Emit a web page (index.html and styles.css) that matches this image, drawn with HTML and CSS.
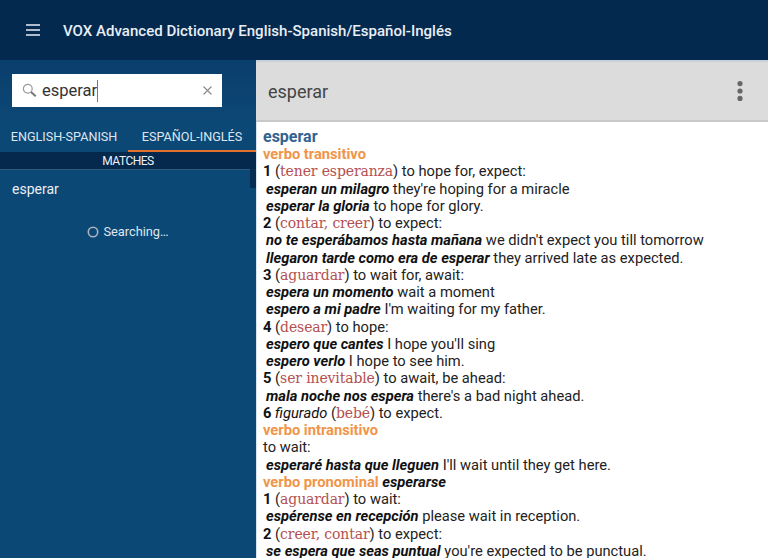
FILE: index.html
```html
<!DOCTYPE html>
<html lang="en">
<head>
<meta charset="utf-8">
<title>VOX Advanced Dictionary</title>
<link rel="stylesheet" href="styles.css">
</head>
<body>
<header class="appbar">
  <svg class="menu-icon" width="14" height="12" viewBox="0 0 14 12"><path d="M0 1h14M0 6h14M0 11h14" stroke="#e6ecf8" stroke-width="1.7" fill="none"/></svg>
  <h1 class="app-title">VOX Advanced Dictionary English-Spanish/Español-Inglés</h1>
</header>
<div class="main">
  <aside class="side">
    <div class="search-wrap">
      <div class="search">
        <svg class="search-icon" width="15" height="15" viewBox="0 0 15 15"><circle cx="5.8" cy="5.8" r="4.4" fill="none" stroke="#9a9a9a" stroke-width="1.2"/><path d="M9 9l4.7 4.2" stroke="#777" stroke-width="2" fill="none"/></svg>
        <span class="search-text">esperar</span><span class="caret"></span>
        <svg class="clear-icon" width="9" height="9" viewBox="0 0 9 9"><path d="M.5.5l8 8M8.5.5l-8 8" stroke="#8a8a8a" stroke-width="1.1" fill="none"/></svg>
      </div>
    </div>
    <nav class="tabs">
      <div class="tab">ENGLISH-SPANISH</div>
      <div class="tab tab-active">ESPAÑOL-INGLÉS</div>
    </nav>
    <div class="list-area">
      <div class="matches">MATCHES</div>
      <div class="match">esperar</div>
      <div class="searching">
        <svg width="12" height="12" viewBox="0 0 12 12"><circle cx="6" cy="6" r="4.7" fill="none" stroke="#a9b4bf" stroke-width="1.6"/></svg>
        <span>Searching…</span>
      </div>
      <div class="scroll-thumb"></div>
    </div>
  </aside>
  <section class="content">
    <div class="word-bar">
      <span class="word-title">esperar</span>
      <svg class="more-icon" width="6" height="20" viewBox="0 0 6 20"><circle cx="3" cy="2.6" r="2.6"/><circle cx="3" cy="10" r="2.6"/><circle cx="3" cy="17.4" r="2.6"/></svg>
    </div>
    <article class="entry">
      <div class="headword">esperar</div>
      <div class="pos">verbo transitivo</div>
      <div><b>1</b> (<span class="syn">tener esperanza</span>) to hope for, expect:</div>
      <div class="ex"><b><i>esperan un milagro</i></b> they're hoping for a miracle</div>
      <div class="ex"><b><i>esperar la gloria</i></b> to hope for glory.</div>
      <div><b>2</b> (<span class="syn">contar, creer</span>) to expect:</div>
      <div class="ex"><b><i>no te esperábamos hasta mañana</i></b> we didn't expect you till tomorrow</div>
      <div class="ex"><b><i>llegaron tarde como era de esperar</i></b> they arrived late as expected.</div>
      <div><b>3</b> (<span class="syn">aguardar</span>) to wait for, await:</div>
      <div class="ex"><b><i>espera un momento</i></b> wait a moment</div>
      <div class="ex"><b><i>espero a mi padre</i></b> I'm waiting for my father.</div>
      <div><b>4</b> (<span class="syn">desear</span>) to hope:</div>
      <div class="ex"><b><i>espero que cantes</i></b> I hope you'll sing</div>
      <div class="ex"><b><i>espero verlo</i></b> I hope to see him.</div>
      <div><b>5</b> (<span class="syn">ser inevitable</span>) to await, be ahead:</div>
      <div class="ex"><b><i>mala noche nos espera</i></b> there's a bad night ahead.</div>
      <div><b>6</b> <i>figurado</i> (<span class="syn">bebé</span>) to expect.</div>
      <div class="pos">verbo intransitivo</div>
      <div>to wait:</div>
      <div class="ex"><b><i>esperaré hasta que lleguen</i></b> I'll wait until they get here.</div>
      <div><span class="pos">verbo pronominal</span> <b><i>esperarse</i></b></div>
      <div><b>1</b> (<span class="syn">aguardar</span>) to wait:</div>
      <div class="ex"><b><i>espérense en recepción</i></b> please wait in reception.</div>
      <div><b>2</b> (<span class="syn">creer, contar</span>) to expect:</div>
      <div class="ex"><b><i>se espera que seas puntual</i></b> you're expected to be punctual.</div>
    </article>
  </section>
</div>
</body>
</html>
```
FILE: styles.css
```css
* { box-sizing: border-box; }
html, body { margin: 0; height: 100%; }
body {
  width: 768px;
  height: 558px;
  overflow: hidden;
  font-family: Roboto, sans-serif;
  background: #0c4876;
  display: flex;
  flex-direction: column;
}
.appbar {
  height: 60px;
  flex: none;
  background: #03294f;
  display: flex;
  align-items: center;
  padding-left: 26px;
  gap: 23px;
}
.menu-icon { flex: none; }
.app-title {
  margin: 2px 0 0;
  font-size: 15.04px;
  font-weight: 500;
  color: #e9eef5;
}
.main { flex: 1; display: flex; min-height: 0; }
.side {
  width: 256px;
  flex: none;
  background: #0c4876;
  color: #e9eef5;
  display: flex;
  flex-direction: column;
}
.search-wrap {
  height: 62px;
  flex: none;
  padding: 14px 34px 15px 12px;
  background: linear-gradient(#0a3e6c, #0c4876);
}
.search {
  height: 33px;
  background: #fff;
  display: flex;
  align-items: center;
  padding-left: 10px;
  padding-right: 10px;
}
.search-icon { flex: none; margin-right: 5px; }
.search-text { font-size: 16.5px; color: #333; }
.caret { width: 1px; height: 22px; background: #2a9d8f; }
.clear-icon { margin-left: auto; }
.tabs { display: flex; height: 30px; flex: none; }
.tab {
  flex: 1;
  font-size: 12.6px;
  display: flex;
  align-items: center;
  justify-content: center;
  color: #dfe6ee;
  padding-bottom: 1px;
}
.tab-active { border-bottom: 2px solid #e2702f; padding-bottom: 0; }
.list-area { position: relative; flex: 1; }
.matches {
  height: 18px;
  background: #04294c;
  border-bottom: 1px solid #2e5a80;
  font-size: 12px;
  letter-spacing: -0.5px;
  text-align: center;
  line-height: 18px;
  color: #eef2f7;
}
.match { padding: 11px 12px 0; font-size: 14px; line-height: 17px; color: #e9eef5; }
.searching {
  margin-top: 26px;
  display: flex;
  align-items: center;
  justify-content: center;
  gap: 4px;
  font-size: 12.8px;
  color: #dfe6ee;
}
.scroll-thumb {
  position: absolute;
  top: 0;
  right: 0;
  width: 6px;
  height: 36px;
  background: #05294b;
  opacity: 0.85;
}
.content { flex: 1; min-width: 0; background: #fff; display: flex; flex-direction: column; }
.word-bar {
  height: 62px;
  flex: none;
  background: #dcdcdc;
  border-top: 2px solid #c8d0da;
  border-bottom: 2px solid #c9c9c9;
  display: flex;
  align-items: center;
  justify-content: space-between;
  padding: 0 25px 0 12px;
}
.word-title { font-size: 18px; color: #444; }
.more-icon { fill: #666; }
.entry {
  flex: 1;
  padding: 6px 7px 0 6px;
  border-left: 1px solid #d5e3ee;
  font-size: 14.7px;
  line-height: 17.25px;
  color: #222;
  overflow: hidden;
  white-space: nowrap;
}
.entry > div { height: 17.25px; }
.entry > .headword { height: 18px; font-size: 16px; font-weight: 700; color: #33628f; }
.pos { font-weight: 700; color: #f0954a; }
.syn { font-family: "DejaVu Serif", serif; font-size: 14px; letter-spacing: -0.13px; line-height: 1; color: #b4504f; }
.ex { padding-left: 3px; }
b, i { color: #111; }
```
